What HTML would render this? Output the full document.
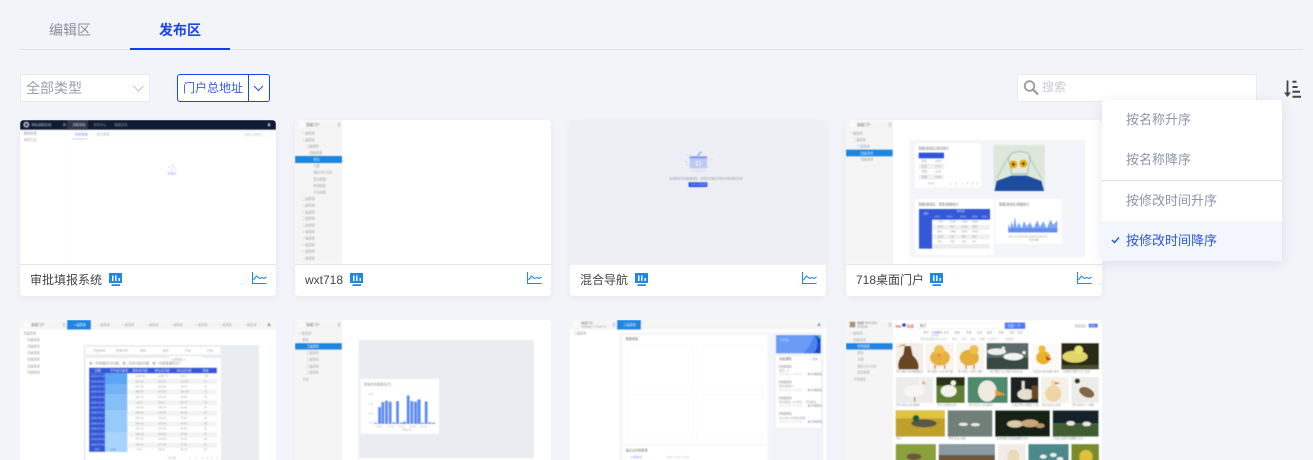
<!DOCTYPE html>
<html lang="zh"><head><meta charset="utf-8"><title>发布区</title>
<style>
*{box-sizing:border-box}
html,body{margin:0;padding:0;width:1313px;height:460px;max-height:460px;overflow:hidden;background:#f3f4f9}
#r{position:relative;width:1313px;height:460px;overflow:hidden;background:#f3f4f9;font-family:"Liberation Sans","Noto Sans CJK SC",sans-serif}
.a{position:absolute}
.tab{position:absolute;top:20px;font-size:14px;line-height:20px}
.card{position:absolute;width:256px;height:176px;background:#fff;border-radius:4px;overflow:hidden;box-shadow:0 2px 8px rgba(40,50,90,.06)}
.card svg.t{position:absolute;left:0;top:0;width:256px;height:144px;filter:blur(.4px);display:block}
.card.r2{height:140px;border-radius:4px 4px 0 0;box-shadow:none}
.card.r2 svg.t{height:140px;filter:none}
.foot{position:absolute;left:0;top:144px;width:256px;height:32px;border-top:1px solid #e6e7ec;background:#fff}
.name{position:absolute;left:10px;top:6px;font-size:12px;line-height:18px;color:#444}
.ic{position:absolute;top:8px;width:13px;height:13px}
.ch{position:absolute;top:7px;width:15px;height:12px}
.mi{position:absolute;left:0;width:180px;height:40px;padding-left:24px;line-height:40px;font-size:13px;color:#8f94a8}
svg text{font-family:"Liberation Sans","Noto Sans CJK SC",sans-serif}
</style></head><body><div id="r">
<svg class="a" style="left:0;top:0" width="0" height="0"><filter id="b" x="0" y="0" width="1" height="1"><feGaussianBlur stdDeviation="1.200"/></filter></svg>

<div class="tab" style="left:49px;color:#8b8f9d">编辑区</div>
<div class="tab" style="left:159px;color:#1a45f0;font-weight:700">发布区</div>
<div class="a" style="left:20px;top:49px;width:1283px;height:1px;background:#e0e2ea"></div>
<div class="a" style="left:130px;top:48px;width:100px;height:2px;background:#0f3df5"></div>

<div class="a" style="left:20px;top:74px;width:130px;height:28px;background:#fff;border:1px solid #e6e8ef;border-radius:2px">
<span class="a" style="left:5px;top:3px;font-size:14px;line-height:20px;color:#9a9dab">全部类型</span>
<svg class="a" style="left:111px;top:9px" width="13" height="9" viewBox="0 0 13 9"><path d="M1.500 2 6.500 7 11.500 2" fill="none" stroke="#c3c6d0" stroke-width="1.200"/></svg>
</div>

<div class="a" style="left:177px;top:74px;width:93px;height:28px;background:#fff;border:1px solid #1a45f0;border-radius:3px">
<span class="a" style="left:5px;top:5px;font-size:12px;line-height:17px;color:#3a5ae8">门户总地址</span>
<div class="a" style="left:70px;top:0;width:1px;height:26px;background:#1a45f0"></div>
<svg class="a" style="left:74px;top:9px" width="13" height="9" viewBox="0 0 13 9"><path d="M2 2 6.500 6.500 11 2" fill="none" stroke="#3a5ae8" stroke-width="1.200"/></svg>
</div>

<div class="a" style="left:1017px;top:74px;width:240px;height:28px;background:#fff;border:1px solid #e9ebf1;border-radius:2px">
<svg class="a" style="left:4px;top:4px" width="17" height="17" viewBox="0 0 17 17"><circle cx="7.500" cy="7" r="4.800" fill="none" stroke="#9a9aa0" stroke-width="1.800"/><path d="M11 10.500 16 15.500" stroke="#9a9aa0" stroke-width="2.200"/></svg>
<span class="a" style="left:24px;top:4px;font-size:12px;line-height:17px;color:#c9cbd2">搜索</span>
</div>

<svg class="a" style="left:1283px;top:79px" width="20" height="20" viewBox="0 0 20 20"><path d="M4.500 1.500V16" stroke="#444" stroke-width="1.800"/><path d="M1 13.500 4.500 18 8 13.500Z" fill="#444"/><path d="M9.500 2.700h4M9.500 8h5M9.500 12.700h7.500M9.500 17.700h8.500" stroke="#444" stroke-width="2"/></svg>

<!-- Row 1 -->
<div class="card" style="left:20px;top:120px">
<svg class="t" viewBox="30 15 768 432">
<rect x="30" y="15" width="768" height="432" fill="#fff"/>
<rect x="30" y="15" width="768" height="29" fill="#0f1a33"/>
<rect x="171" y="15" width="63" height="29" fill="#2e3648"/>
<circle cx="49" cy="29" r="9" fill="#aeb2bb"/><circle cx="49" cy="29" r="4" fill="#2e3648"/>
<text x="64" y="33" font-size="10" fill="#b8bcc6">审批填报系统</text>
<rect x="159" y="24" width="8" height="10" fill="#596070"/>
<text x="187" y="33" font-size="10" fill="#c9ccd4">流程审批</text>
<text x="250" y="33" font-size="10" fill="#8e93a0">任务中心</text>
<text x="313" y="33" font-size="10" fill="#8e93a0">数据总览</text>
<path d="M773 33q0-5 4-5t4 5zM775 24h4v4h-4z" fill="#d6d8de"/>
<text x="41" y="58" font-size="10" fill="#8b8f99">我的任务</text>
<text x="41" y="78" font-size="10" fill="#a2a5ae">我的已办</text>
<rect x="169" y="44" width="1" height="403" fill="#f0f1f3"/>
<text x="194" y="62" font-size="10" fill="#7f95e2">待我审批</text>
<text x="260" y="62" font-size="10" fill="#b3b6bd">我已审批</text>
<rect x="186" y="71" width="48" height="2" fill="#a8b8ee"/>
<rect x="171" y="73" width="627" height="1" fill="#f4f5f7"/>
<rect x="695" y="50" width="88" height="17" fill="#fff" stroke="#f0f1f3"/>
<text x="702" y="62" font-size="9" fill="#c5c7cd">请输入关键词</text>
<circle cx="488" cy="152" r="2" fill="#9fb2ee"/><circle cx="494" cy="159" r="2" fill="#a7b8ef"/><circle cx="485" cy="165" r="2" fill="#b5c4f1"/><circle cx="478" cy="157" r="2" fill="#9fb2ee"/>
<text x="472" y="178" font-size="9" fill="#8ea3e8">加载中</text>
</svg>
<div class="foot"><span class="name">审批填报系统</span>
<svg class="ic" style="left:89px" viewBox="0 0 13 13"><path d="M0 0H13V10H0Z" fill="#1e88e5"/><path d="M3 2.500H4.500V8H3ZM6 2.500H7.500V8H6ZM9.500 5H11V8H9.500Z" fill="#fff"/><path d="M2.500 11.300H11V13H2.500Z" fill="#1e88e5"/></svg>
<svg class="ch" style="left:232px" viewBox="0 0 15 12"><path d="M.5 0V11.500H14.500" fill="none" stroke="#1e8ae6" stroke-width="1.100"/><path d="M1.500 8 4.500 4 7.500 6.500 10 5.500 12 6.500 14.500 5" fill="none" stroke="#1e8ae6" stroke-width="1.100"/></svg>
</div></div>

<div class="card" style="left:295px;top:120px">
<svg class="t" viewBox="30 15 768 432">
<rect x="30" y="15" width="768" height="432" fill="#fff"/>
<rect x="30" y="15" width="141" height="432" fill="#f5f5f5"/>
<circle cx="49" cy="29" r="9" fill="#fbfbfb"/><text x="64" y="33" font-size="10" fill="#777">数据门户</text><rect x="158" y="23" width="8" height="12" fill="#d5d5d5"/>
<g font-size="9.500" fill="#a5a5a5">
<text x="52" y="58">一级菜单</text><text x="52" y="78">二级菜单</text><text x="64" y="97">三级菜单</text><text x="74" y="117">四级菜单</text>
<text x="85" y="156">大屏</text><text x="85" y="176">指标卡片分析</text><text x="85" y="196">复杂表格</text><text x="85" y="216">样例报表</text><text x="85" y="235">平台报表</text>
<text x="52" y="255">二级菜单</text><text x="52" y="275">二级菜单</text><text x="52" y="295">二级菜单</text><text x="52" y="314">二级菜单</text><text x="52" y="334">二级菜单</text>
<text x="52" y="354">一级菜单</text><text x="52" y="373">一级菜单</text><text x="52" y="393">一级菜单</text><text x="52" y="413">一级菜单</text><text x="52" y="433">一级菜单</text>
</g>
<rect x="30" y="123" width="141" height="21" fill="#1b86e0"/>
<text x="85" y="137" font-size="9.500" fill="#d6e9fa">报告</text>
</svg>
<div class="foot"><span class="name">wxt718</span>
<svg class="ic" style="left:54.700px" viewBox="0 0 13 13"><path d="M0 0H13V10H0Z" fill="#1e88e5"/><path d="M3 2.500H4.500V8H3ZM6 2.500H7.500V8H6ZM9.500 5H11V8H9.500Z" fill="#fff"/><path d="M2.500 11.300H11V13H2.500Z" fill="#1e88e5"/></svg>
<svg class="ch" style="left:232px" viewBox="0 0 15 12"><path d="M.5 0V11.500H14.500" fill="none" stroke="#1e8ae6" stroke-width="1.100"/><path d="M1.500 8 4.500 4 7.500 6.500 10 5.500 12 6.500 14.500 5" fill="none" stroke="#1e8ae6" stroke-width="1.100"/></svg>
</div></div>

<div class="card" style="left:570px;top:120px;background:#eeeff4">
<svg class="t" viewBox="30 15 768 432">
<rect x="30" y="15" width="768" height="432" fill="#eeeff4"/>
<ellipse cx="415" cy="168" rx="24" ry="4" fill="#dfe4f5"/>
<ellipse cx="451" cy="134" rx="10" ry="5" fill="#e3e7f4"/><ellipse cx="384" cy="119" rx="8" ry="4" fill="#e6e9f4"/>
<rect x="389" y="124" width="52" height="36" fill="#bccbf5"/><rect x="389" y="124" width="52" height="6" fill="#7e96e6"/>
<rect x="408" y="138" width="14" height="14" fill="#e6ebfb"/><rect x="414" y="141" width="3" height="7" fill="#6e86dc"/>
<path d="M412 122 425 110" stroke="#7a90e2" stroke-width="3"/>
<rect x="376" y="138" width="5" height="5" fill="#c4cff2"/><rect x="381" y="148" width="4" height="4" fill="#cfd8f3"/><rect x="444" y="153" width="3" height="3" fill="#c4cff2"/>
<text x="327" y="193" font-size="8.500" fill="#9a9eae">当前报表暂无数据权限，请联系管理员开通访问权限后查看</text>
<rect x="386" y="202" width="56" height="14" fill="#1c44e6"/>
<text x="392" y="212" font-size="8" fill="#c5d0f8">申请访问权限</text>
</svg>
<div class="foot" style="border-top-color:#eeeff4"><span class="name">混合导航</span>
<svg class="ic" style="left:65px" viewBox="0 0 13 13"><path d="M0 0H13V10H0Z" fill="#1e88e5"/><path d="M3 2.500H4.500V8H3ZM6 2.500H7.500V8H6ZM9.500 5H11V8H9.500Z" fill="#fff"/><path d="M2.500 11.300H11V13H2.500Z" fill="#1e88e5"/></svg>
<svg class="ch" style="left:232px" viewBox="0 0 15 12"><path d="M.5 0V11.500H14.500" fill="none" stroke="#1e8ae6" stroke-width="1.100"/><path d="M1.500 8 4.500 4 7.500 6.500 10 5.500 12 6.500 14.500 5" fill="none" stroke="#1e8ae6" stroke-width="1.100"/></svg>
</div></div>

<div class="card" style="left:846px;top:120px">
<svg class="t" viewBox="18 15 768 432">
<rect x="18" y="15" width="768" height="432" fill="#fff"/>
<rect x="18" y="15" width="141" height="432" fill="#f5f5f5"/>
<circle cx="37" cy="29" r="9" fill="#fbfbfb"/><text x="52" y="33" font-size="10" fill="#777">数据门户</text><rect x="146" y="23" width="8" height="12" fill="#d5d5d5"/>
<g font-size="9.500" fill="#a5a5a5"><text x="30" y="58">一级菜单</text><text x="40" y="78">二级菜单</text><text x="52" y="97">三级菜单</text><text x="62" y="137">四级菜单</text></g>
<rect x="18" y="104" width="140" height="20" fill="#1b86e0"/><text x="62" y="118" font-size="9.500" fill="#d6e9fa">四级菜单</text>
<rect x="208" y="75" width="527" height="353" fill="#f3f5fa"/>
<rect x="225" y="85" width="198" height="132" fill="#fff"/>
<text x="236" y="103" font-size="9.500" fill="#777">数据(按地区)项目统计</text>
<rect x="236" y="113" width="76" height="17" fill="#2f55dc"/>
<rect x="236" y="146" width="76" height="16" fill="#f0f0f0"/><rect x="236" y="178" width="76" height="16" fill="#f0f0f0"/>
<g font-size="8.500" fill="#999"><text x="244" y="141">华东</text><text x="285" y="141">2333</text><text x="244" y="157">华北</text><text x="285" y="157">7777</text><text x="244" y="173">华南</text><text x="285" y="173">1130</text><text x="244" y="189">华西</text><text x="285" y="189">3746</text></g>
<g font-size="8" fill="#aaa"><text x="263" y="209">共5条</text><text x="330" y="209">1</text><text x="345" y="209">2</text><text x="365" y="209">3</text><text x="380" y="209">4</text><text x="395" y="209">5</text><text x="410" y="209">6</text></g>
<rect x="461" y="90" width="154" height="138" fill="#dde7db"/>
<path d="M506 132q2-22 34-22t30 22l-8 45h-46z" fill="#e3eae0" stroke="#8ea9a0" stroke-width="2"/>
<circle cx="520" cy="148" r="12" fill="#e7ac17"/><circle cx="550" cy="146" r="12" fill="#e7ac17"/><circle cx="520" cy="148" r="4" fill="#4a3a1a"/><circle cx="550" cy="146" r="4" fill="#4a3a1a"/>
<path d="M470 190 505 125M605 190 566 125" stroke="#a4bcb3" stroke-width="2" fill="none"/>
<path d="M464 228 470 198 515 182H560L604 198 612 228Z" fill="#1e4ca0"/>
<rect x="225" y="252" width="237" height="168" fill="#fff"/>
<text x="236" y="271" font-size="9.500" fill="#777">数据(按地区、类型)明细统计</text>
<rect x="237" y="282" width="213" height="32" fill="#3358d8"/><rect x="237" y="282" width="39" height="119" fill="#3358d8"/>
<rect x="276" y="330" width="174" height="15" fill="#f0f0f0"/><rect x="276" y="358" width="174" height="15" fill="#f0f0f0"/><rect x="276" y="387" width="174" height="14" fill="#ececec"/>
<g font-size="8" fill="#999"><text x="292" y="323">7100</text><text x="330" y="323">3200</text><text x="365" y="323">7000</text><text x="396" y="323">3330</text><text x="292" y="337">1600</text><text x="330" y="337">860</text><text x="365" y="337">1510</text><text x="396" y="337">3807</text><text x="292" y="352">880</text><text x="330" y="352">3300</text><text x="365" y="352">6970</text><text x="396" y="352">3700</text><text x="292" y="367">1300</text><text x="330" y="367">330</text><text x="365" y="367">500</text><text x="396" y="367">360</text><text x="292" y="382">370</text><text x="330" y="382">760</text><text x="365" y="382">700</text><text x="396" y="382">131</text></g>
<g font-size="8" fill="#cfd8f5"><text x="250" y="298">地区</text><text x="350" y="291">销售额</text><text x="283" y="307">2017</text><text x="320" y="307">2018</text><text x="360" y="307">2019</text><text x="395" y="307">2020</text><text x="425" y="307">2021</text></g>
<rect x="467" y="252" width="198" height="133" fill="#fff"/>
<text x="477" y="271" font-size="9.500" fill="#777">数据(按地区)明细统计</text>
<path d="M505 352V325L510 340 515 320 520 336 525 305 530 338 537 322 545 340 552 318 560 335 570 322 580 340 592 316 600 336 610 318 620 340 632 314 640 330 652 316V352Z" fill="#7fa4f2"/>
<rect x="505" y="340" width="147" height="12" fill="#5f8ef0"/>
<text x="505" y="368" font-size="7.500" fill="#9a9a9a">2017-01 2017-06 2018-01 2019-01</text>
<text x="566" y="377" font-size="7.500" fill="#9a9a9a">年份日期</text>
</svg>
<div class="foot"><span class="name">718桌面门户</span>
<svg class="ic" style="left:84px" viewBox="0 0 13 13"><path d="M0 0H13V10H0Z" fill="#1e88e5"/><path d="M3 2.500H4.500V8H3ZM6 2.500H7.500V8H6ZM9.500 5H11V8H9.500Z" fill="#fff"/><path d="M2.500 11.300H11V13H2.500Z" fill="#1e88e5"/></svg>
<svg class="ch" style="left:231px" viewBox="0 0 15 12"><path d="M.5 0V11.500H14.500" fill="none" stroke="#1e8ae6" stroke-width="1.100"/><path d="M1.500 8 4.500 4 7.500 6.500 10 5.500 12 6.500 14.500 5" fill="none" stroke="#1e8ae6" stroke-width="1.100"/></svg>
</div></div>

<!-- Row 2 -->
<div class="card r2" style="left:20px;top:320px">
<svg class="t" viewBox="30 15 768 420"><g filter="url(#b)">
<rect x="30" y="15" width="768" height="432" fill="#fff"/>
<rect x="30" y="15" width="768" height="29" fill="#f5f5f5"/>
<circle cx="49" cy="29" r="9" fill="#fbfbfb"/><text x="64" y="33" font-size="10" fill="#777">数据门户</text><rect x="158" y="23" width="8" height="12" fill="#d5d5d5"/>
<rect x="171" y="15" width="72" height="29" fill="#1b86e0"/><text x="190" y="33" font-size="9.500" fill="#cfe5f8">一级菜单</text>
<g font-size="9.500" fill="#aaa"><text x="262" y="33">一级菜单</text><text x="335" y="33">一级菜单</text><text x="408" y="33">一级菜单</text><text x="481" y="33">一级菜单</text><text x="555" y="33">一级菜单</text><text x="628" y="33">一级菜单</text><text x="702" y="33">一级菜单</text></g>
<path d="M773 33q0-5 4-5t4 5zM775 24h4v4h-4z" fill="#777"/>
<g font-size="9.500" fill="#999"><text x="41" y="58">四级菜单</text><text x="52" y="78">四级菜单</text><text x="52" y="97">四级菜单</text><text x="52" y="117">四级菜单</text><text x="52" y="137">四级菜单</text><text x="52" y="157">四级菜单</text><text x="52" y="176">四级菜单</text></g>
<rect x="221" y="90" width="526" height="357" fill="#e9edf2"/>
<rect x="227" y="96" width="404" height="22" fill="#fff"/>
<g font-size="9" fill="#aaa"><text x="250" y="110">开始时间</text><text x="318" y="110">结束时间</text><text x="390" y="110">地区</text><text x="458" y="110">类别</text><text x="525" y="110">行业</text><text x="590" y="110">分组</text></g>
<rect x="227" y="129" width="406" height="318" fill="#fff"/>
<rect x="480" y="124" width="96" height="16" fill="#fff"/><text x="485" y="136" font-size="8.500" fill="#aaa">全部地区 ▾</text>
<text x="237" y="148" font-size="10" fill="#888">第一列线路状况问题，第二列状况和问题，第一列是表格形式？</text>
<rect x="237" y="158" width="384" height="17" fill="#3358d8"/>
<rect x="237" y="175" width="48" height="236" fill="#3358d8"/>
<rect x="285" y="175" width="67" height="32" fill="#5aa6f4"/><rect x="285" y="207" width="67" height="32" fill="#72b4f6"/><rect x="285" y="239" width="67" height="48" fill="#85bff8"/><rect x="285" y="287" width="67" height="64" fill="#96cafa"/><rect x="285" y="351" width="67" height="60" fill="#a6d4fc"/>
<rect x="352" y="191" width="269" height="16" fill="#f3f3f3"/><rect x="352" y="223" width="269" height="16" fill="#f3f3f3"/><rect x="352" y="255" width="269" height="16" fill="#f3f3f3"/><rect x="352" y="287" width="269" height="16" fill="#f3f3f3"/><rect x="352" y="319" width="269" height="16" fill="#f3f3f3"/><rect x="352" y="351" width="269" height="16" fill="#f3f3f3"/><rect x="352" y="383" width="269" height="16" fill="#f3f3f3"/>
<g font-size="9" fill="#d5def8"><text x="254" y="170">日期</text><text x="300" y="170">平均合同金额</text><text x="368" y="170">累积合同额</text><text x="434" y="170">单位合同额</text><text x="500" y="170">单位合同额</text><text x="578" y="170">数量</text></g>
<g font-size="8" fill="#b8c6f2"><text x="243" y="186">2021-07-18</text><text x="243" y="202">2019-04-16</text><text x="243" y="217">2019-07-17</text><text x="243" y="233">2019-06-15</text><text x="243" y="249">2020-06-19</text><text x="243" y="265">2020-12-21</text><text x="243" y="281">2019-07-15</text><text x="243" y="296">2019-07-17</text><text x="243" y="312">2019-09-17</text><text x="243" y="328">2019-07-16</text><text x="243" y="344">2019-07-15</text><text x="243" y="360">2019-07-15</text><text x="243" y="375">2019-04-16</text><text x="243" y="391">2019-07-16</text><text x="254" y="407">合计</text></g>
<g font-size="8" fill="#9a9a9a"><text x="376" y="186">1265.56</text><text x="444" y="186">1295.71</text><text x="511" y="186">322.7</text><text x="582" y="186">136</text><text x="376" y="202">373.33</text><text x="444" y="202">223.33</text><text x="511" y="202">173.22</text><text x="582" y="202">71</text><text x="376" y="217">417.33</text><text x="444" y="217">323.33</text><text x="511" y="217">134.5</text><text x="582" y="217">76</text><text x="376" y="233">680.07</text><text x="444" y="233">473.33</text><text x="511" y="233">134.33</text><text x="582" y="233">74</text><text x="376" y="249">322.73</text><text x="444" y="249">162.33</text><text x="511" y="249">75.93</text><text x="582" y="249">73</text><text x="380" y="265">0.00</text><text x="444" y="265">242.5</text><text x="511" y="265">64.73</text><text x="582" y="265">52</text><text x="376" y="281">172.33</text><text x="444" y="281">239.33</text><text x="511" y="281">44.09</text><text x="582" y="281">51</text><text x="376" y="296">208.13</text><text x="444" y="296">109.33</text><text x="511" y="296">44.09</text><text x="582" y="296">57</text><text x="376" y="312">235.33</text><text x="444" y="312">102.33</text><text x="511" y="312">75.93</text><text x="582" y="312">51</text><text x="376" y="328">254.33</text><text x="444" y="328">109.33</text><text x="511" y="328">44.09</text><text x="582" y="328">59</text><text x="376" y="344">122.15</text><text x="444" y="344">127.04</text><text x="511" y="344">37.04</text><text x="582" y="344">51</text><text x="376" y="360">109.33</text><text x="444" y="360">262.09</text><text x="511" y="360">37.04</text><text x="582" y="360">57</text><text x="376" y="375">177.33</text><text x="444" y="375">129.33</text><text x="511" y="375">75.93</text><text x="582" y="375">58</text><text x="376" y="391">130.33</text><text x="444" y="391">127.04</text><text x="511" y="391">37.04</text><text x="582" y="391">51</text><text x="380" y="407">0.00</text><text x="444" y="407">242.5</text><text x="511" y="407">64.73</text><text x="582" y="407">52</text></g>
<text x="300" y="407" font-size="8" fill="#5d7fb8">1038</text>
<g font-size="8" fill="#aaa"><text x="474" y="432">共15条</text><text x="538" y="432">1</text><text x="556" y="432">2</text><text x="575" y="432">3</text><text x="590" y="432">4</text><text x="604" y="432">5</text><text x="618" y="432">6</text></g>
</g></svg>
</div>

<div class="card r2" style="left:295px;top:320px">
<svg class="t" viewBox="30 15 768 420"><g filter="url(#b)">
<rect x="30" y="15" width="768" height="432" fill="#fff"/>
<rect x="30" y="15" width="141" height="432" fill="#f5f5f5"/>
<circle cx="49" cy="29" r="9" fill="#fbfbfb"/><text x="64" y="33" font-size="10" fill="#777">数据门户</text><rect x="158" y="23" width="8" height="12" fill="#d5d5d5"/>
<g font-size="9.500" fill="#a5a5a5"><text x="41" y="58">一级菜单</text><text x="52" y="78">报告</text><text x="64" y="117">三级菜单</text><text x="64" y="137">三级菜单</text><text x="64" y="157">三级菜单</text><text x="64" y="176">三级菜单</text><text x="52" y="196">平台</text></g>
<rect x="30" y="84" width="141" height="20" fill="#1b86e0"/><text x="64" y="98" font-size="9.500" fill="#d6e9fa">三级菜单</text>
<rect x="221" y="75" width="526" height="355" fill="#e9edf2"/>
<rect x="227" y="192" width="235" height="164" fill="#fff"/>
<text x="237" y="212" font-size="9.500" fill="#888">新增合同金额(百万)</text>
<rect x="237" y="218" width="220" height="1" fill="#f2f2f2"/>
<g font-size="7.500" fill="#b3b3b3"><text x="249" y="240">3.00</text><text x="249" y="270">2.00</text><text x="249" y="299">1.00</text><text x="249" y="326">0.00</text><text x="275" y="337">2020</text><text x="308" y="337">01-12</text><text x="342" y="337">04-01</text><text x="374" y="337">06-03</text><text x="406" y="337">09-01</text><text x="350" y="346">日期分布</text></g>
<path d="M268 323h8v4h-8zM279 276h9v51h-9zM289 261h9v66h-9zM300 257h9v70h-9zM311 260h9v67h-9zM322 322h9v5h-9zM333 258h9v69h-9zM344 323h9v4h-9zM354 320h9v7h-9zM365 241h9v86h-9zM376 258h9v69h-9zM387 260h9v67h-9zM397 253h10v74h-10zM408 323h9v4h-9zM419 259h9v68h-9zM430 322h9v5h-9zM441 323h9v4h-9z" fill="#5b8def"/>
</g></svg>
</div>

<div class="card r2" style="left:570px;top:320px">
<svg class="t" viewBox="30 15 768 420"><g filter="url(#b)">
<rect x="30" y="15" width="768" height="432" fill="#fff"/>
<rect x="30" y="15" width="768" height="29" fill="#f5f5f5"/>
<circle cx="49" cy="29" r="9" fill="#fbfbfb"/><text x="64" y="27" font-size="9" fill="#777">数据门户</text><text x="64" y="37" font-size="7.500" fill="#aaa">智能数据门户系统平台</text><rect x="158" y="23" width="8" height="12" fill="#d5d5d5"/>
<rect x="171" y="15" width="72" height="29" fill="#1b86e0"/><text x="190" y="33" font-size="9.500" fill="#cfe5f8">三级菜单</text>
<path d="M773 33q0-5 4-5t4 5zM775 24h4v4h-4z" fill="#777"/>
<text x="41" y="58" font-size="9.500" fill="#999">三级菜单</text>
<rect x="179" y="52" width="611" height="395" fill="#f4f5fb"/>
<rect x="187" y="60" width="436" height="328" fill="#fff"/>
<rect x="187" y="393" width="436" height="54" fill="#fff"/>
<text x="197" y="75" font-size="9.500" fill="#666">数据看板</text>
<g fill="#fff" stroke="#f2f3f5" stroke-width="1.500"><rect x="203" y="90" width="197" height="136"/><rect x="410" y="90" width="197" height="136"/><rect x="203" y="238" width="197" height="137"/><rect x="410" y="238" width="197" height="137"/></g>
<text x="197" y="409" font-size="9.500" fill="#666">最近访问的报表</text>
<text x="211" y="429" font-size="9" fill="#8ea5e8">大屏报表</text><text x="320" y="429" font-size="8.500" fill="#c2c2c2">2021-10-06 14:00</text>
<rect x="640" y="52" width="150" height="395" fill="#f1f3f9"/>
<rect x="648" y="60" width="134" height="55" fill="#6a9cf5"/>
<path d="M730 115q25-25 32-55h20v55z" fill="#4e83ec"/><path d="M762 115q18-25 4-55h16v55z" fill="#1f49c9"/><path d="M766 60h16v12z" fill="#3ec2a8"/>
<text x="658" y="78" font-size="9" fill="#dce8fd">下午好，</text>
<rect x="648" y="123" width="134" height="215" fill="#fff"/>
<text x="657" y="135" font-size="9.500" fill="#666">消息通知</text><text x="757" y="135" font-size="8.500" fill="#7f98e8">更多</text>
<g font-size="8.500"><rect x="657" y="150" width="2.500" height="8" fill="#c26fd0"/><text x="662" y="157" fill="#888">数据报表</text><text x="657" y="169" fill="#aaa">报表_02</text><text x="657" y="180" fill="#cdcdcd" font-size="7.500">2022-08-07 15:00:33</text><rect x="744" y="174" width="6" height="6" fill="#6eaef0"/><text x="753" y="180" fill="#888">查看报表</text>
<rect x="657" y="197" width="2.500" height="8" fill="#c26fd0"/><text x="662" y="204" fill="#888">数据报表</text><text x="657" y="216" fill="#aaa">报表数据02</text><text x="657" y="228" fill="#cdcdcd" font-size="7.500">2022-08-07 15:00:33</text><rect x="744" y="222" width="6" height="6" fill="#6eaef0"/><text x="753" y="228" fill="#888">查看报表</text>
<rect x="657" y="245" width="2.500" height="8" fill="#c26fd0"/><text x="662" y="252" fill="#888">数据报表</text><text x="657" y="264" fill="#aaa">报表数据_02(月份)，季报报表</text><text x="657" y="275" fill="#cdcdcd" font-size="7.500">2022-08-07 15:00:33</text><rect x="744" y="269" width="6" height="6" fill="#6eaef0"/><text x="753" y="275" fill="#888">查看报表</text>
<rect x="657" y="292" width="2.500" height="8" fill="#c26fd0"/><text x="662" y="299" fill="#888">数据报表</text><text x="657" y="312" fill="#aaa">2022年08月报表数据</text><text x="657" y="323" fill="#cdcdcd" font-size="7.500">2022-08-07 15:00:33</text><rect x="744" y="317" width="6" height="6" fill="#6eaef0"/><text x="753" y="323" fill="#888">查看报表</text></g>
</g></svg>
</div>

<div class="card r2" style="left:846px;top:320px">
<svg class="t" viewBox="18 15 768 420"><g filter="url(#b)">
<rect x="18" y="15" width="768" height="432" fill="#fff"/>
<rect x="18" y="15" width="141" height="432" fill="#f5f5f5"/>
<rect x="29" y="20" width="17" height="17" fill="#a89478"/>
<text x="52" y="27" font-size="9" fill="#666">数据门户(门户)</text><text x="52" y="37" font-size="7.500" fill="#999">智能数据</text><rect x="146" y="23" width="8" height="12" fill="#d5d5d5"/>
<g font-size="9.500" fill="#a5a5a5"><text x="30" y="58">一级菜单</text><text x="40" y="78">四级应用</text><text x="52" y="117">报告</text><text x="52" y="137">大屏</text><text x="52" y="157">指标卡片分析</text><text x="52" y="176">复杂报表</text><text x="40" y="196">平台报表</text></g>
<rect x="18" y="84" width="140" height="20" fill="#1b86e0"/><text x="52" y="98" font-size="9.500" fill="#d6e9fa">样例报表</text>
<text x="166" y="38" font-size="11" fill="#e02020" font-weight="700">Bai</text><circle cx="192" cy="30" r="6" fill="#2a4fd0"/><text x="200" y="38" font-size="11" fill="#e02020" font-weight="700">百度</text>
<rect x="232" y="23" width="262" height="18" fill="#fff" stroke="#dcdcdc"/><text x="240" y="36" font-size="9.500" fill="#555">鸭子</text>
<rect x="494" y="22" width="62" height="20" rx="3" fill="#4e7cf2"/><text x="503" y="36" font-size="9.500" fill="#d8e4fc">百度一下</text>
<text x="704" y="36" font-size="8.500" fill="#888">百度首页</text><rect x="746" y="26" width="27" height="12" rx="2" fill="#4e6ff0"/><text x="751" y="35" font-size="7.500" fill="#dde4fd">登录</text>
<g font-size="8.500" fill="#a8a8a8"><text x="250" y="56">网页</text><text x="274" y="56" fill="#5f7fd8">全部图片</text><text x="310" y="56">资讯</text><text x="343" y="56">视频</text><text x="378" y="56">地图</text><text x="410" y="56">文库</text><text x="440" y="56">贴吧</text><text x="475" y="56">采购</text><text x="508" y="56">百科</text><text x="532" y="56">更多</text></g>
<rect x="273" y="61" width="24" height="1.500" fill="#7f9be6"/>
<g font-size="8" fill="#bcbcbc"><text x="240" y="75">找到相关图片约1220条</text><text x="336" y="75">相关</text><text x="363" y="75">高清</text><text x="391" y="75">最新</text><text x="418" y="75">动图</text><text x="444" y="75">全部尺寸 ⌄</text><text x="492" y="75">全部颜色 ⌄</text></g>
<!-- row 1 photos -->
<rect x="167" y="84" width="83" height="79" fill="#f3eee9"/><path d="M176 163q-6-26 14-44l4-26h18l6 28q22 20 17 42z" fill="#6a4422"/><path d="M196 92 170 96 194 86Z" fill="#d49a2f"/>
<rect x="258" y="84" width="84" height="79" fill="#f8f4ef"/><ellipse cx="300" cy="128" rx="30" ry="24" fill="#e5b240"/><circle cx="298" cy="106" r="16" fill="#edc04f"/><path d="M290 116h14l-6 14z" fill="#ed8a3a"/><path d="M285 150v12M314 150v12" stroke="#d8722a" stroke-width="4"/>
<rect x="349" y="84" width="83" height="79" fill="#f8f4ef"/><ellipse cx="388" cy="128" rx="29" ry="24" fill="#e4ae38"/><circle cx="402" cy="104" r="14" fill="#edc04f"/><path d="M378 150v12M402 150v12" stroke="#d8722a" stroke-width="4"/>
<rect x="440" y="84" width="125" height="79" fill="#5b6b6a"/><rect x="440" y="128" width="125" height="35" fill="#394843"/><ellipse cx="470" cy="110" rx="28" ry="10" fill="#eee"/><ellipse cx="520" cy="125" rx="30" ry="11" fill="#f3f3f3"/><circle cx="490" cy="100" r="5" fill="#eee"/><circle cx="552" cy="113" r="5" fill="#f2f2f2"/>
<rect x="573" y="84" width="84" height="79" fill="#fbfaf7"/><ellipse cx="610" cy="128" rx="22" ry="20" fill="#e8b32b"/><circle cx="606" cy="102" r="11" fill="#eebd30"/><path d="M616 122l20 12-16 2z" fill="#c23a2c"/>
<rect x="664" y="84" width="113" height="79" fill="#292a18"/><ellipse cx="705" cy="125" rx="38" ry="18" fill="#dfd56a"/><circle cx="716" cy="105" r="13" fill="#e8e06f"/><rect x="664" y="150" width="113" height="13" fill="#47502c"/>
<!-- row 2 -->
<rect x="167" y="186" width="113" height="78" fill="#ececec"/><ellipse cx="222" cy="228" rx="32" ry="18" fill="#f8f6f3"/><rect x="238" y="196" width="10" height="28" fill="#f8f6f3"/><path d="M247 198l11 9-11-1z" fill="#d6762c"/><path d="M224 246v14" stroke="#d6762c" stroke-width="4"/>
<rect x="289" y="186" width="85" height="78" fill="#5e7f33"/><rect x="289" y="186" width="85" height="26" fill="#2a3518"/><ellipse cx="326" cy="228" rx="24" ry="18" fill="#f4f2ec"/><circle cx="340" cy="204" r="8" fill="#f4f2ec"/>
<rect x="383" y="186" width="120" height="78" fill="#4f8a6e"/><ellipse cx="442" cy="228" rx="28" ry="32" fill="#eeeae0"/><path d="M466 224l32 16-32 2z" fill="#ea9a26"/>
<rect x="512" y="186" width="83" height="78" fill="#1f2220"/><ellipse cx="558" cy="238" rx="26" ry="16" fill="#e5dfce"/><rect x="545" y="198" width="9" height="32" fill="#e5dfce"/><rect x="575" y="212" width="20" height="40" fill="#6b4a22"/>
<rect x="603" y="186" width="83" height="78" fill="#f4f1eb"/><ellipse cx="640" cy="236" rx="24" ry="24" fill="#f0d5a4"/><rect x="633" y="196" width="12" height="30" fill="#f0d9af"/><path d="M645 200l16 5-16 4z" fill="#d6802c"/>
<rect x="694" y="186" width="83" height="78" fill="#eeece8"/><ellipse cx="740" cy="232" rx="24" ry="14" fill="#836548" transform="rotate(25 740 232)"/><circle cx="712" cy="198" r="8" fill="#1e3d28"/><rect x="712" y="205" width="10" height="14" fill="#f0f0ee"/>
<!-- row 3 -->
<rect x="167" y="286" width="148" height="79" fill="#bfa12c"/><rect x="167" y="286" width="148" height="24" fill="#e0c441"/><ellipse cx="252" cy="325" rx="38" ry="12" fill="#5a5648"/><circle cx="228" cy="310" r="10" fill="#1c5a3a"/>
<rect x="323" y="286" width="134" height="79" fill="#6f7f78"/><ellipse cx="370" cy="328" rx="14" ry="5" fill="#e8e6df"/><ellipse cx="406" cy="329" rx="14" ry="5" fill="#e8e6df"/>
<rect x="465" y="286" width="165" height="79" fill="#162017"/><ellipse cx="525" cy="327" rx="24" ry="11" fill="#d8c9ab"/><ellipse cx="570" cy="325" rx="26" ry="12" fill="#c9a67b"/><ellipse cx="600" cy="332" rx="14" ry="7" fill="#bf9468"/>
<rect x="638" y="286" width="138" height="40" fill="#15202a"/><rect x="638" y="326" width="138" height="39" fill="#3f5d33"/><ellipse cx="692" cy="325" rx="13" ry="7" fill="#e8e6df"/><ellipse cx="740" cy="327" rx="13" ry="7" fill="#e8e6df"/>
<g font-size="8" fill="#999"><text x="170" y="172">鸭子图片的详细图解析</text><text x="262" y="172">鸭子图片-全景 鸭子图</text><text x="354" y="172">鸭子图片 小鸭子 图片</text><text x="450" y="172">鸭子图片大全 图片库的高清</text><text x="578" y="172">可爱的小鸭子图片素材</text><text x="668" y="172">卡通鸭子图片大全 高清</text><text x="170" y="273">鸭子的怎么清洗图片</text><text x="293" y="273">鸭子方面的分析</text><text x="387" y="273">鸭子的怎么清洗图片</text><text x="516" y="273">可爱的鸭子的图片下载</text><text x="607" y="273">鸭子的怎么清洗</text><text x="698" y="273">鸭子的什么一张图</text><text x="170" y="374">鸭子</text><text x="327" y="374">鸭子在水 池塘</text><text x="469" y="374">水中的鸭子的品种图片大全</text><text x="641" y="374">草地上的鸭子的图片大全</text></g>
<!-- row 4 -->
<rect x="167" y="387" width="121" height="60" fill="#8aa13a"/><ellipse cx="222" cy="425" rx="22" ry="10" fill="#70593a"/>
<rect x="296" y="387" width="169" height="60" fill="#8a9aa0"/><rect x="296" y="420" width="169" height="27" fill="#6d5a3c"/>
<rect x="474" y="387" width="83" height="60" fill="#f1ede6"/><ellipse cx="520" cy="425" rx="18" ry="22" fill="#ecd9b6"/>
<rect x="565" y="387" width="121" height="60" fill="#4b8a8c"/><ellipse cx="610" cy="425" rx="10" ry="6" fill="#eee"/><ellipse cx="640" cy="420" rx="10" ry="6" fill="#eee"/><ellipse cx="660" cy="432" rx="10" ry="6" fill="#eee"/>
<rect x="694" y="387" width="83" height="60" fill="#7a8c2c"/><ellipse cx="738" cy="425" rx="20" ry="20" fill="#e0c03e"/>
</g></svg>
</div>

<!-- Sort dropdown -->
<div class="a" style="left:1102px;top:100px;width:180px;height:161px;background:#fff;box-shadow:0 3px 12px rgba(40,50,90,.1)">
<div class="mi" style="top:0">按名称升序</div>
<div class="mi" style="top:40px">按名称降序</div>
<div class="a" style="left:0;top:80px;width:180px;height:1px;background:#dfe0e5"></div>
<div class="mi" style="top:81px">按修改时间升序</div>
<div class="mi" style="top:121px;background:#f3f6fd;color:#2a55e5">按修改时间降序</div>
<svg class="a" style="left:9px;top:136px" width="9" height="8" viewBox="0 0 9 8"><path d="M1 4 3.500 6.500 8 1.500" fill="none" stroke="#2a55e5" stroke-width="1.500"/></svg>
</div>
</div></body></html>
